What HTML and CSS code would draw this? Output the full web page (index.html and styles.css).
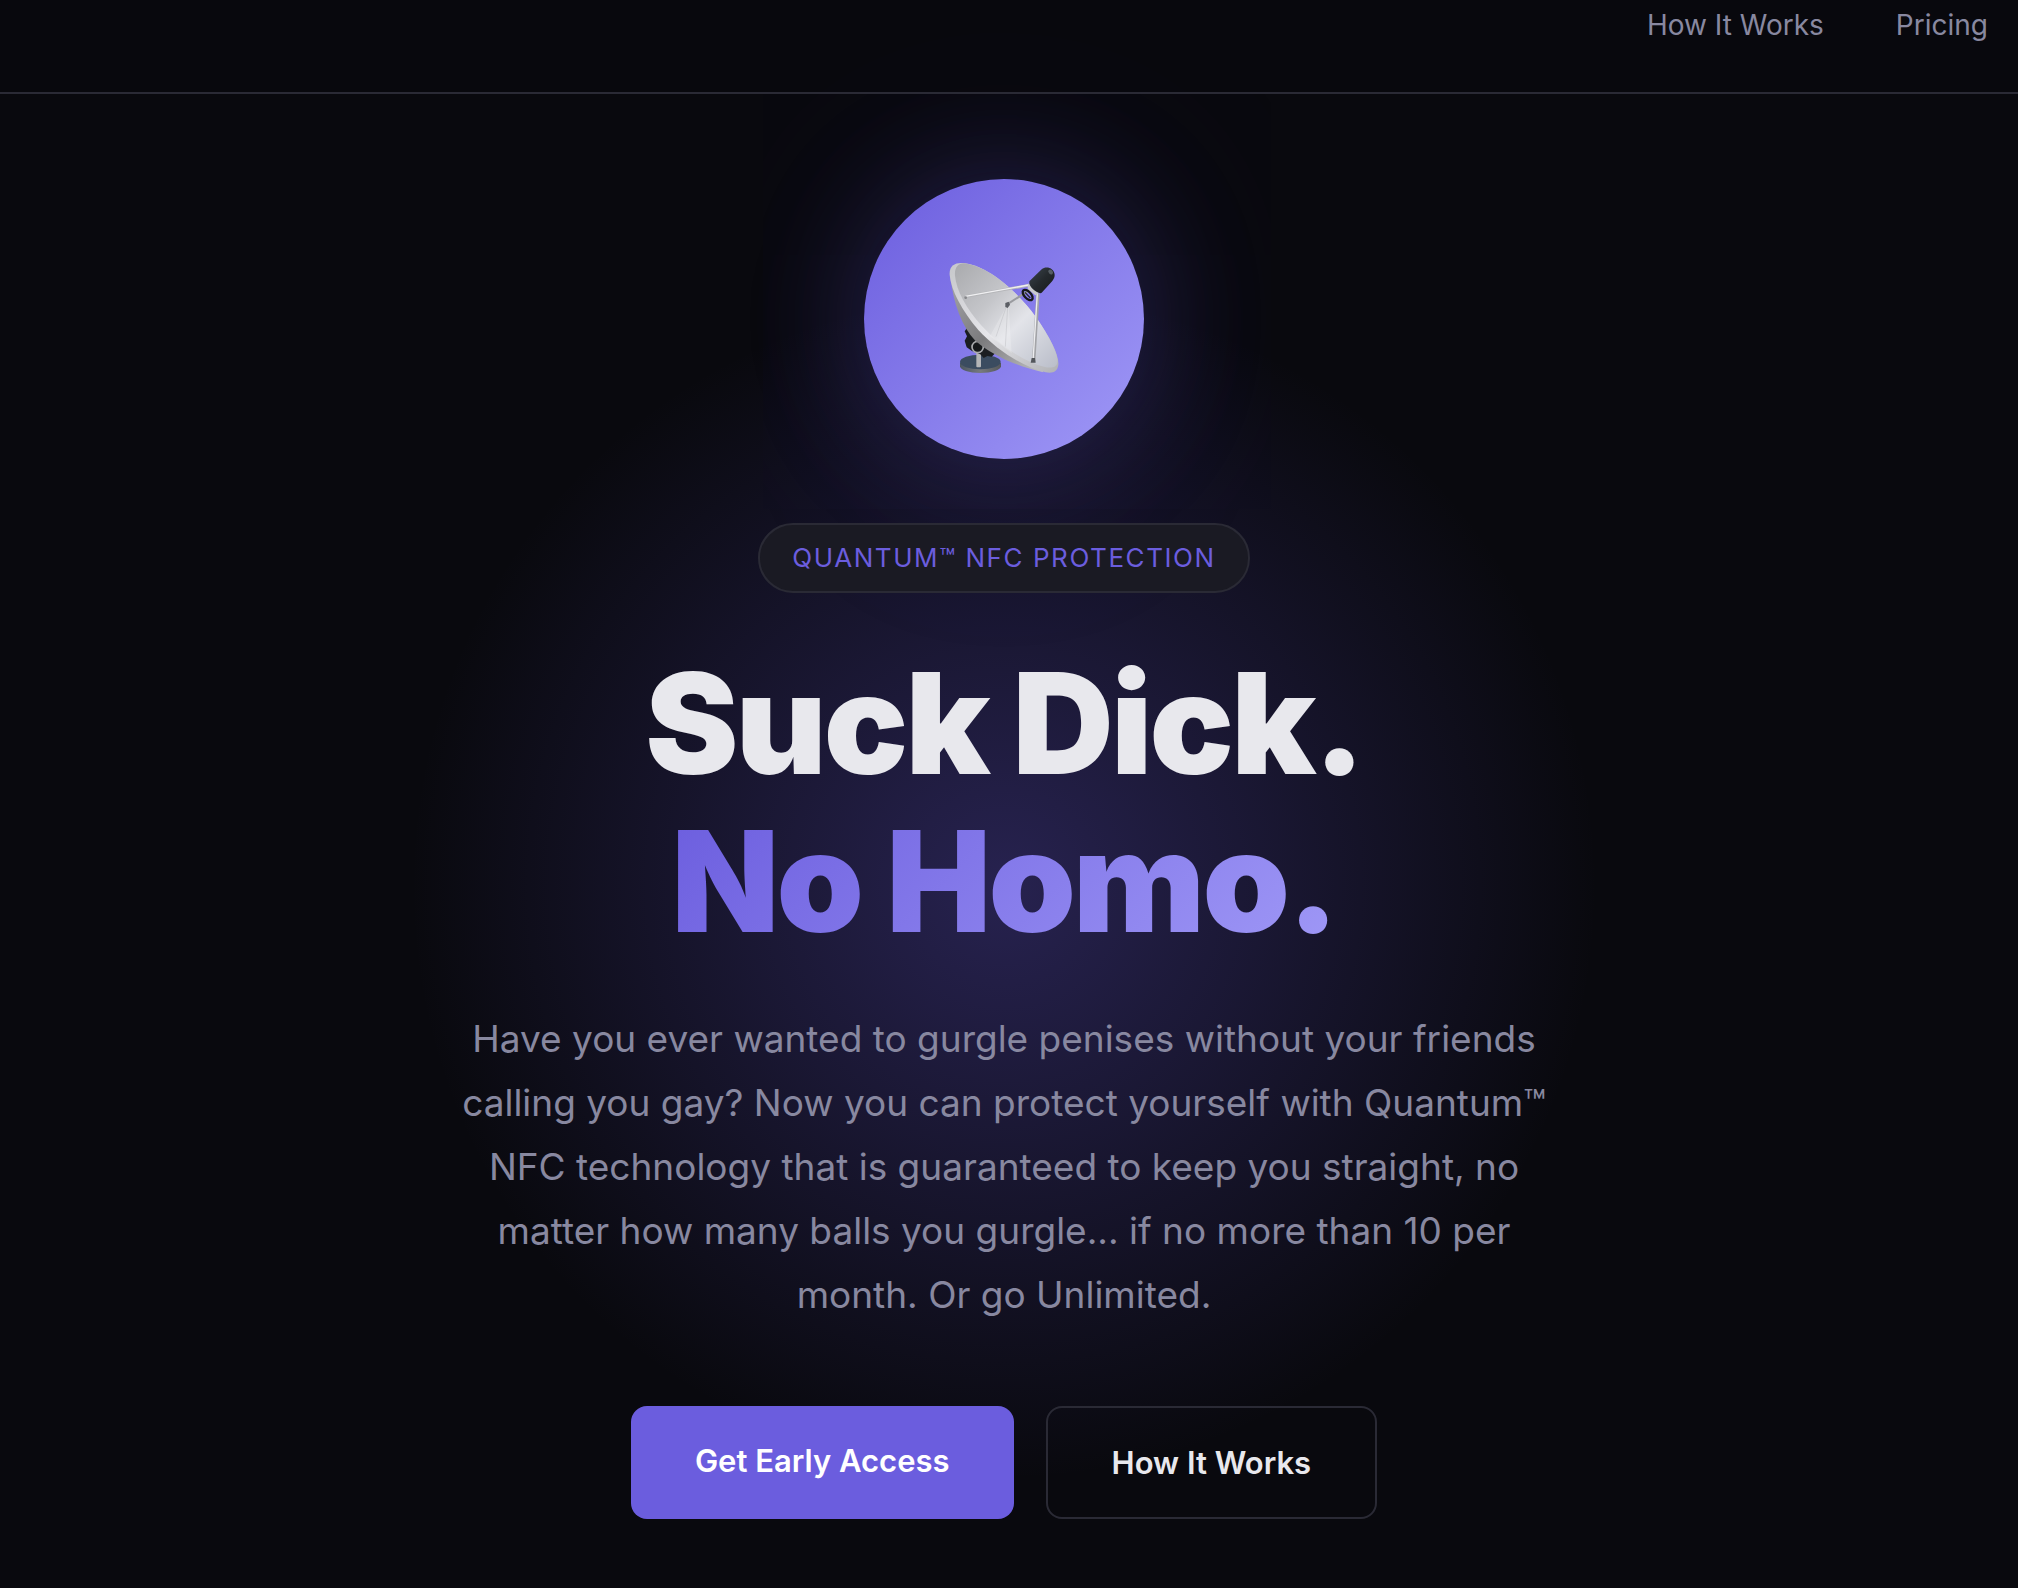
FILE: index.html
```html
<!DOCTYPE html>
<html lang="en">
<head>
  <meta charset="UTF-8" />
  <meta name="viewport" content="width=device-width, initial-scale=1.0"/>
  <title>Quantum™ NFC Protection</title>
  <link rel="stylesheet" href="styles.css">
</head>
<body>
  <header class="header">
    <nav class="nav">
      <a href="#how">How It Works</a>
      <a href="#pricing">Pricing</a>
    </nav>
  </header>

  <main class="hero">
    <div class="hero-icon">
      <svg class="dish" viewBox="120 75 384 384" aria-hidden="true">
        <defs>
          <linearGradient id="bowl" x1="0" y1="0" x2="1" y2="1">
            <stop offset="0" stop-color="#a9aaad"/>
            <stop offset="0.35" stop-color="#c4c5c9"/>
            <stop offset="0.6" stop-color="#e3e4e9"/>
            <stop offset="1" stop-color="#b9bdc9"/>
          </linearGradient>
          <linearGradient id="rim" x1="0" y1="0" x2="1" y2="1">
            <stop offset="0" stop-color="#c6c7ca"/>
            <stop offset="0.5" stop-color="#e6e6ea"/>
            <stop offset="1" stop-color="#b0b1b4"/>
          </linearGradient>
          <linearGradient id="back" x1="0" y1="0" x2="1" y2="1">
            <stop offset="0" stop-color="#a5a5a8"/>
            <stop offset="0.5" stop-color="#7b7b7d"/>
            <stop offset="1" stop-color="#c0c0c3"/>
          </linearGradient>
          <linearGradient id="foot" x1="0" y1="0" x2="1" y2="0">
            <stop offset="0" stop-color="#4b5661"/>
            <stop offset="0.5" stop-color="#777a7e"/>
            <stop offset="1" stop-color="#55585b"/>
          </linearGradient>
          <linearGradient id="horn" x1="0" y1="0" x2="1" y2="1">
            <stop offset="0" stop-color="#3c454e"/>
            <stop offset="0.5" stop-color="#24292d"/>
            <stop offset="1" stop-color="#17191b"/>
          </linearGradient>
        </defs>
        <!-- base -->
        <path d="M180 399v10c0 11 27 20 61 20s62-9 62-20v-10z" fill="url(#foot)"/>
        <ellipse cx="241" cy="396" rx="61" ry="22" fill="#3b4c60"/>
        <rect x="229" y="365" width="14" height="47" rx="3" fill="#b4b5b7"/>
        <!-- mount -->
        <path d="M203 291l-9 13 7 15-7 13 6 20 16 11 25 10 10 11 11-6 13 2 12-12-30-30z" fill="#1b1e21"/>
        <circle cx="233" cy="351" r="17" fill="#15181a" stroke="#a9abad" stroke-width="5"/>
        <!-- reflector -->
        <path d="M152 145C160 220 185 290 226 332C275 375 350 409 430 427L380 330z" fill="url(#back)"/>
        <path d="M149 135C147 107 164 97 190 99C265 107 350 184 407 260C450 322 478 375 475 405C472 424 460 431 437 427C370 412 290 360 235 300C185 242 153 180 149 135z" fill="url(#rim)"/>
        <path d="M165 137C163 112 174 101 191 100C265 107 350 184 407 260C450 322 476 375 472 398C469 412 455 415 435 411C370 396 300 345 245 287C198 236 169 180 165 137z" fill="url(#bowl)"/>
        <path d="M320 228L270 318L335 370L326 228z" fill="#fff" opacity="0.2"/>
        <path d="M319 230L288 320M323 230L316 350" stroke="#a6a7ac" stroke-width="3" opacity="0.3"/>
        <!-- feed arms -->
        <path d="M196 200L385 166" stroke="#b5b6b9" stroke-width="8" stroke-linecap="round"/>
        <path d="M196 199L385 165" stroke="#f0f0f2" stroke-width="4"/>
        <path d="M320 224L392 178" stroke="#9a9b9f" stroke-width="6"/>
        <path d="M414 190L401 394" stroke="#a3a4a8" stroke-width="10"/>
        <path d="M412 190L399 394" stroke="#ececef" stroke-width="4"/>
        <path d="M316 219l10-4 4 9-7 10-7-3z" fill="#5b5e64"/>
        <path d="M395 384h10l2 14h-15z" fill="#53565b"/>
        <circle cx="197" cy="203" r="4" fill="#85868a"/>
        <ellipse cx="383" cy="195" rx="10" ry="19" transform="rotate(-43 383 195)" fill="none" stroke="#17191b" stroke-width="7"/>
        <path d="M375 187L391 204" stroke="#24282c" stroke-width="4"/>
        <path d="M384 160l30 22 1 10-9 4-23-20z" fill="#c9cacd"/>
        <path d="M388 154L425 118C438 107 463 114 464 135C464 143 460 149 455 155L425 188C419 195 384 174 388 154z" fill="url(#horn)"/>
        <ellipse cx="452" cy="126" rx="8" ry="6" transform="rotate(45 452 126)" fill="#778089" opacity="0.6"/>
      </svg>
    </div>

    <div class="badge">Quantum™ NFC Protection</div>

    <h1 class="title">
      Suck Dick.<br />
      <span class="gradient-text">No Homo.</span>
    </h1>

    <p class="subtitle">
      Have you ever wanted to gurgle penises without your friends calling you gay?
      Now you can protect yourself with Quantum™ NFC technology that is guaranteed
      to keep you straight, no matter how many balls you gurgle... if no more than
      10 per month. Or go Unlimited.
    </p>

    <div class="actions">
      <a href="#access" class="btn btn-primary">Get Early Access</a>
      <a href="#how" class="btn btn-secondary">How It Works</a>
    </div>
  </main>
</body>
</html>
```
FILE: styles.css
```css
* {
  margin: 0;
  padding: 0;
  box-sizing: border-box;
}
body {
  font-family: Inter, "Liberation Sans", sans-serif;
  background-color: #09090e;
  color: #e8e8ed;
  min-height: 100vh;
  overflow-x: hidden;
}
a {
  text-decoration: none;
}
.header {
  position: relative;
  z-index: 1;
  padding: 2px 30px 44px;
  background-color: rgba(9, 9, 14, 0.8);
  border-bottom: 2px solid #2a2a35;
}
.nav {
  display: flex;
  justify-content: flex-end;
  gap: 72px;
}
.nav a {
  color: #8888a0;
  font-size: 28px;
  line-height: 46px;
}
.hero {
  position: relative;
  display: flex;
  flex-direction: column;
  align-items: center;
  padding: 85px 42px 69px 32px;
  text-align: center;
}
.hero::before {
  content: "";
  position: absolute;
  z-index: -1;
  top: 53%;
  left: 50%;
  width: 1200px;
  height: 1200px;
  margin-left: -5px;
  transform: translate(-50%, -50%);
  background: radial-gradient(circle, rgba(108, 92, 231, 0.3) 0%, transparent 70%);
}
.hero-icon {
  display: flex;
  justify-content: center;
  align-items: center;
  width: 280px;
  height: 280px;
  margin-bottom: 64px;
  border-radius: 50%;
  background: linear-gradient(135deg, #6b5dde, #a099f7);
  box-shadow: 0 0 120px rgba(108, 92, 231, 0.25), 0 0 240px rgba(108, 92, 231, 0.15);
}
.dish {
  width: 128px;
  height: 128px;
}
.badge {
  padding: 16px 32px;
  margin-bottom: 51px;
  background-color: #1a1a23;
  border: 2px solid #2a2a35;
  border-radius: 40px;
  color: #6b5dde;
  font-size: 26px;
  line-height: 34px;
  letter-spacing: 0.06em;
  text-transform: uppercase;
}
.title {
  margin-bottom: 47px;
  font-size: 140px;
  font-weight: 900;
  line-height: 158px;
  letter-spacing: -0.02em;
}
.gradient-text {
  background: linear-gradient(135deg, #6b5dde, #a099f7);
  -webkit-background-clip: text;
  background-clip: text;
  color: transparent;
}
.subtitle {
  max-width: 1110px;
  margin-bottom: 79px;
  color: #8888a0;
  font-size: 37px;
  line-height: 64px;
}
.actions {
  display: flex;
  flex-wrap: wrap;
  justify-content: center;
  gap: 32px;
}
.btn {
  padding: 29px 64px;
  border-radius: 16px;
  font-size: 31px;
  font-weight: 600;
  line-height: 51px;
}
.btn-primary {
  background-color: #6b5dde;
  color: #fff;
}
.btn-secondary {
  border: 2px solid #2a2a35;
  color: #e8e8ed;
}
```
